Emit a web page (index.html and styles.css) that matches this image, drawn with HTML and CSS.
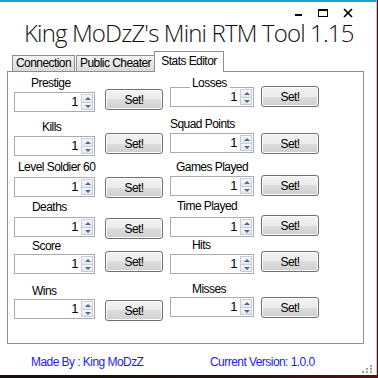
FILE: index.html
```html
<!DOCTYPE html>
<html lang="en">
<head>
    <meta charset="UTF-8">
    <title>King MoDzZ's Mini RTM Tool 1.15</title>
    <link rel="stylesheet" href="styles.css">
</head>
<body>
    <div class="window">
        <div class="caption">
            <svg class="caption-buttons" width="66" height="17" viewBox="0 0 66 17">
                <rect x="5" y="12" width="7" height="2" fill="#000"/>
                <rect x="28.5" y="7.5" width="9" height="7" fill="none" stroke="#000"/>
                <rect x="28" y="7" width="10" height="2" fill="#000"/>
                <path d="M54 7 L62 15 M62 7 L54 15" stroke="#000" stroke-width="1.7"/>
            </svg>
        </div>

        <h1 class="app-title">King MoDzZ's Mini RTM Tool 1.15</h1>

        <!-- Tab control -->
        <div class="tab-strip">
            <span class="tab tab-connection">Connection</span>
            <span class="tab tab-public">Public Cheater</span>
            <span class="tab tab-active">Stats Editor</span>
        </div>

        <div class="tab-page">
            <div class="stat-column column-left">
                <div class="stat stat-prestige">
                    <span class="stat-label">Prestige</span>
                    <div class="stat-row">
                        <div class="spin-field"><span class="spin-value">1</span><span class="spin-buttons"><span class="spin-btn spin-up"></span><span class="spin-btn spin-down"></span></span></div>
                        <button class="set-btn">Set!</button>
                    </div>
                </div>
                <div class="stat stat-kills">
                    <span class="stat-label">Kills</span>
                    <div class="stat-row">
                        <div class="spin-field"><span class="spin-value">1</span><span class="spin-buttons"><span class="spin-btn spin-up"></span><span class="spin-btn spin-down"></span></span></div>
                        <button class="set-btn">Set!</button>
                    </div>
                </div>
                <div class="stat stat-level">
                    <span class="stat-label">Level Soldier 60</span>
                    <div class="stat-row">
                        <div class="spin-field"><span class="spin-value">1</span><span class="spin-buttons"><span class="spin-btn spin-up"></span><span class="spin-btn spin-down"></span></span></div>
                        <button class="set-btn">Set!</button>
                    </div>
                </div>
                <div class="stat stat-deaths">
                    <span class="stat-label">Deaths</span>
                    <div class="stat-row">
                        <div class="spin-field"><span class="spin-value">1</span><span class="spin-buttons"><span class="spin-btn spin-up"></span><span class="spin-btn spin-down"></span></span></div>
                        <button class="set-btn">Set!</button>
                    </div>
                </div>
                <div class="stat stat-score">
                    <span class="stat-label">Score</span>
                    <div class="stat-row">
                        <div class="spin-field"><span class="spin-value">1</span><span class="spin-buttons"><span class="spin-btn spin-up"></span><span class="spin-btn spin-down"></span></span></div>
                        <button class="set-btn">Set!</button>
                    </div>
                </div>
                <div class="stat stat-wins">
                    <span class="stat-label">Wins</span>
                    <div class="stat-row">
                        <div class="spin-field"><span class="spin-value">1</span><span class="spin-buttons"><span class="spin-btn spin-up"></span><span class="spin-btn spin-down"></span></span></div>
                        <button class="set-btn">Set!</button>
                    </div>
                </div>
            </div>

            <div class="stat-column column-right">
                <div class="stat stat-losses">
                    <span class="stat-label">Losses</span>
                    <div class="stat-row">
                        <div class="spin-field"><span class="spin-value">1</span><span class="spin-buttons"><span class="spin-btn spin-up"></span><span class="spin-btn spin-down"></span></span></div>
                        <button class="set-btn">Set!</button>
                    </div>
                </div>
                <div class="stat stat-squad">
                    <span class="stat-label">Squad Points</span>
                    <div class="stat-row">
                        <div class="spin-field"><span class="spin-value">1</span><span class="spin-buttons"><span class="spin-btn spin-up"></span><span class="spin-btn spin-down"></span></span></div>
                        <button class="set-btn">Set!</button>
                    </div>
                </div>
                <div class="stat stat-games">
                    <span class="stat-label">Games Played</span>
                    <div class="stat-row">
                        <div class="spin-field"><span class="spin-value">1</span><span class="spin-buttons"><span class="spin-btn spin-up"></span><span class="spin-btn spin-down"></span></span></div>
                        <button class="set-btn">Set!</button>
                    </div>
                </div>
                <div class="stat stat-time">
                    <span class="stat-label">Time Played</span>
                    <div class="stat-row">
                        <div class="spin-field"><span class="spin-value">1</span><span class="spin-buttons"><span class="spin-btn spin-up"></span><span class="spin-btn spin-down"></span></span></div>
                        <button class="set-btn">Set!</button>
                    </div>
                </div>
                <div class="stat stat-hits">
                    <span class="stat-label">Hits</span>
                    <div class="stat-row">
                        <div class="spin-field"><span class="spin-value">1</span><span class="spin-buttons"><span class="spin-btn spin-up"></span><span class="spin-btn spin-down"></span></span></div>
                        <button class="set-btn">Set!</button>
                    </div>
                </div>
                <div class="stat stat-misses">
                    <span class="stat-label">Misses</span>
                    <div class="stat-row">
                        <div class="spin-field"><span class="spin-value">1</span><span class="spin-buttons"><span class="spin-btn spin-up"></span><span class="spin-btn spin-down"></span></span></div>
                        <button class="set-btn">Set!</button>
                    </div>
                </div>
            </div>
        </div>

        <footer class="status">
            <span>Made By : King MoDzZ</span>
            <span>Current Version: 1.0.0</span>
        </footer>

        <svg class="grip" width="11" height="9" viewBox="0 0 11 9">
            <rect x="8" y="0" width="2" height="2" fill="#a3a3a3"/>
            <rect x="4" y="3" width="2" height="2" fill="#a3a3a3"/>
            <rect x="8" y="3" width="2" height="2" fill="#a3a3a3"/>
            <rect x="0" y="6" width="2" height="2" fill="#a3a3a3"/>
            <rect x="4" y="6" width="2" height="2" fill="#a3a3a3"/>
            <rect x="8" y="6" width="2" height="2" fill="#a3a3a3"/>
        </svg>
    </div>
</body>
</html>
```

FILE: styles.css
```css
body {
    margin: 0;
    background: linear-gradient(to right, #141010, #2a1414 70%, #5a1010);
    font-family: 'Liberation Sans', Arial, sans-serif;
    font-size: 12px;
    letter-spacing: -0.55px;
    color: #000;
}

.window {
    position: relative;
    width: 376px;
    height: 373px;
    background: #fff;
    border-top: 2px solid #1ba1e2;
    border-right: 1px solid #c6c6c6;
}

.caption {
    display: flex;
    justify-content: flex-end;
    height: 17px;
    padding-right: 20px;
}

.app-title {
    margin: 0;
    padding-left: 24px;
    font-family: 'Open Sans', sans-serif;
    font-weight: 300;
    font-size: 24px;
    line-height: 28px;
    letter-spacing: -0.85px;
    white-space: nowrap;
    color: #111;
}

/* tabs */
.tab-strip {
    display: flex;
    align-items: flex-end;
    height: 20px;
    margin: 4px 0 0 12px;
}

.tab {
    box-sizing: border-box;
    height: 16px;
    line-height: 15px;
    text-align: center;
    border: 1px solid #8c8e94;
    border-bottom: none;
    background: linear-gradient(#f4f4f4, #e6e6e6 50%, #d9d9d9);
    white-space: nowrap;
}

.tab-connection {
    width: 63px;
    margin-right: 1px;
}

.tab-public {
    width: 79px;
}

.tab-active {
    position: relative;
    z-index: 2;
    width: 70px;
    height: 21px;
    margin-bottom: -1px;
    margin-left: -1px;
    padding-top: 2px;
    background: #fff;
}

.tab-page {
    display: grid;
    grid-template-columns: 156px 1fr;
    box-sizing: border-box;
    width: 357px;
    height: 273px;
    margin-left: 7px;
    padding: 4px 0 0 6px;
    border: 1px solid #8c8e94;
}

/* stat rows */
.stat {
    margin-top: var(--space, 0);
}

.stat-label {
    position: relative;
    z-index: 1;
    display: block;
    width: fit-content;
    height: 15px;
    line-height: 15px;
    margin-left: var(--indent, 0);
    padding: 0 3px 0 2px;
    background: #fff;
    white-space: nowrap;
}

.stat-row {
    display: flex;
    align-items: flex-start;
    height: 20px;
    margin-top: var(--gap, 1px);
}

.spin-field {
    display: flex;
    align-items: center;
    justify-content: flex-end;
    box-sizing: border-box;
    width: 81px;
    height: 20px;
    padding: 1px;
    border: 1px solid #a9abb0;
    background: #fff;
}

.column-right .spin-field {
    width: 84px;
}

.spin-value {
    padding-right: 3px;
    font-size: 13px;
    line-height: 16px;
}

.spin-buttons {
    display: flex;
    flex-direction: column;
    width: 12px;
    height: 16px;
}

.spin-btn {
    position: relative;
    flex: 1;
    box-sizing: border-box;
    border: 1px solid #c9ced6;
    background: linear-gradient(#f6f7f9, #e4e8ee);
}

.spin-down {
    border-top: none;
}

.spin-btn::after {
    content: '';
    position: absolute;
    left: 3px;
    border-left: 3px solid transparent;
    border-right: 3px solid transparent;
}

.spin-up::after {
    top: 2px;
    border-bottom: 3px solid #52698f;
}

.spin-down::after {
    top: 2px;
    border-top: 3px solid #52698f;
}

.set-btn {
    box-sizing: border-box;
    width: 58px;
    height: 21px;
    margin: var(--btn, 0) 0 0 10px;
    padding: 0;
    font-family: inherit;
    font-size: 12px;
    letter-spacing: inherit;
    color: #000;
    border: 1px solid #707070;
    border-radius: 3px;
    background: linear-gradient(#f2f2f2, #ebebeb 50%, #dddddd 50%, #cfcfcf);
    box-shadow: inset 0 0 0 1px #fcfcfc;
}

.column-right .set-btn {
    margin-left: 7px;
}

.stat-prestige { --indent: 15px; --btn: -3px; }
.stat-kills { --space: 8px; --indent: 26px; --btn: -3px; }
.stat-level { --space: 4px; --indent: 2px; --gap: 2px; }
.stat-deaths { --space: 3px; --indent: 16px; --gap: 2px; --btn: 1px; }
.stat-score { --space: 2px; --indent: 16px; --gap: 0; --btn: -3px; }
.stat-wins { --space: 10px; --indent: 16px; --gap: 0; --btn: 1px; }

.stat-losses { --indent: 20px; --gap: -4px; --btn: -1px; }
.stat-squad { --space: 10px; --indent: -2px; }
.stat-games { --space: 7px; --indent: 4px; --btn: -1px; }
.stat-time { --space: 3px; --indent: 5px; --gap: 3px; --btn: -2px; }
.stat-hits { --space: 1px; --indent: 20px; --btn: -3px; }
.stat-misses { --space: 8px; --indent: 20px; --gap: 0; }

/* footer */
.status {
    display: grid;
    grid-template-columns: 179px auto;
    margin-top: 11px;
    padding-left: 31px;
    line-height: 15px;
    color: #1a1aff;
}

.grip {
    position: absolute;
    right: 3px;
    bottom: 1px;
}
```
